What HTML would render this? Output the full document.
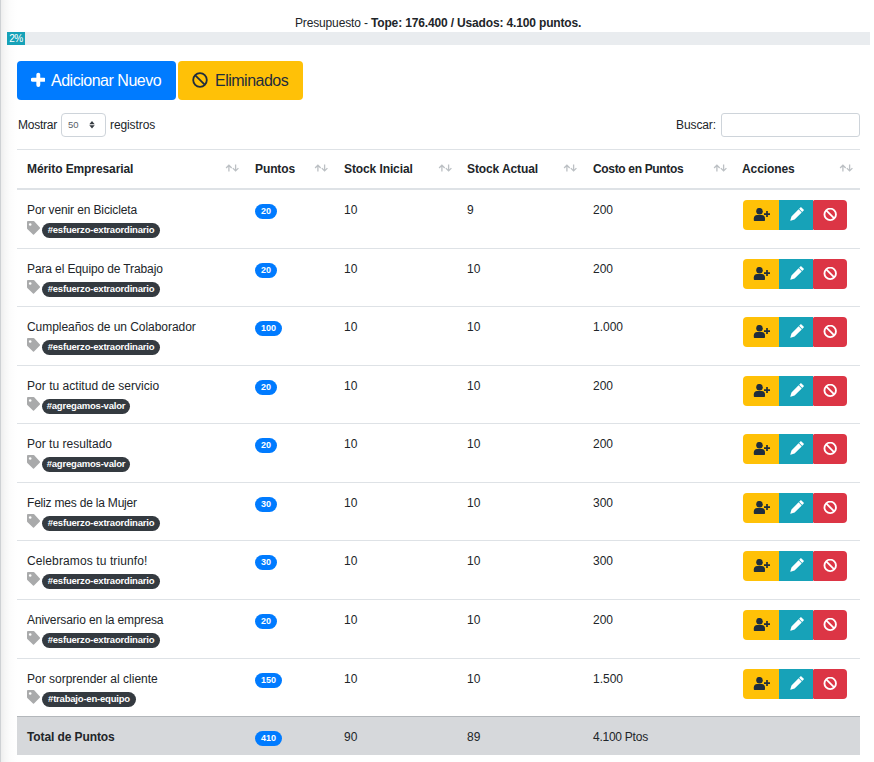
<!DOCTYPE html><html><head><meta charset="utf-8"><style>
html,body{margin:0;padding:0;}
body{width:874px;height:762px;overflow:hidden;position:relative;background:#fff;font-family:"Liberation Sans",sans-serif;color:#212529;}
.shadow{position:absolute;left:0;top:0;width:18px;height:762px;background:linear-gradient(to right,#ced1d4 0,#ced1d4 1px,#efefef 1.5px,#f6f6f6 5px,#fcfcfc 10px,#fff 17px);}
.a{position:absolute;white-space:nowrap;}
.si{position:absolute;}
.hline{position:absolute;left:17px;width:843px;height:1px;background:#dee2e6;}
.nm{font-size:12px;letter-spacing:-0.12px;}
.num{font-size:12px;}
.bold{font-weight:bold;}
.pill{position:absolute;height:15px;border-radius:8px;background:#007bff;color:#fff;font-weight:bold;font-size:9px;line-height:15px;text-align:center;}
.tagb{position:absolute;height:15px;border-radius:8px;background:#343a40;color:#fff;font-weight:bold;font-size:9.5px;line-height:13px;text-align:center;letter-spacing:-0.2px;}
.btn{position:absolute;height:30px;display:flex;align-items:center;justify-content:center;}
</style></head><body>
<div class="shadow"></div>

<div class="a" style="left:295px;top:16px;font-size:12px;line-height:14px;letter-spacing:-0.15px">Presupuesto - <b>Tope: 176.400 / Usados: 4.100 puntos.</b></div>
<div class="a" style="left:7px;top:32px;width:863px;height:13px;background:#e9ecef"></div>
<div class="a" style="left:7px;top:32px;width:18px;height:13px;background:#17a2b8;color:#fff;font-size:10px;line-height:13px;text-align:center;letter-spacing:-0.4px">2%</div>
<div class="a" style="left:17px;top:61px;width:159px;height:39px;background:#007bff;border-radius:4px;"></div>
<svg class="a" style="left:31px;top:72px" width="14" height="15" viewBox="0 0 14 15"><path d="M7.3 2.6v10.4M1.6 7.8h11.4" stroke="#fff" stroke-width="3.9" stroke-linecap="round"/></svg>
<div class="a" style="left:51px;top:71.5px;font-size:16px;line-height:18px;color:#fff;letter-spacing:-0.48px">Adicionar Nuevo</div>
<div class="a" style="left:178px;top:61px;width:125px;height:39px;background:#ffc107;border-radius:4px;"></div>
<div class="a" style="left:192px;top:72px"><svg width="16" height="16" viewBox="0 0 16 16"><circle cx="8" cy="8" r="6.8" fill="none" stroke="#1f2d3d" stroke-width="1.8"/><path d="M3.3 3.3l9.4 9.4" stroke="#1f2d3d" stroke-width="1.8"/></svg></div>
<div class="a" style="left:215px;top:71.5px;font-size:16px;line-height:18px;color:#1f2d3d;letter-spacing:-0.5px">Eliminados</div>
<div class="a" style="left:18px;top:118px;font-size:12px;line-height:14px;letter-spacing:-0.25px">Mostrar</div>
<div class="a" style="left:61px;top:113px;width:43px;height:22px;border:1px solid #ced4da;border-radius:4px;"></div>
<div class="a" style="left:68px;top:119px;font-size:9.5px;line-height:11px;color:#5a6169;letter-spacing:-0.1px">50</div>
<svg class="a" style="left:89px;top:120px" width="6" height="10" viewBox="0 0 6 10"><path d="M0.3 4.3L3 1L5.7 4.3Z M0.3 5.2L3 8.6L5.7 5.2Z" fill="#343a40"/></svg>
<div class="a" style="left:110px;top:118px;font-size:12px;line-height:14px;letter-spacing:-0.1px">registros</div>
<div class="a" style="left:676px;top:118px;font-size:12px;line-height:14px;letter-spacing:-0.1px">Buscar:</div>
<div class="a" style="left:721px;top:113px;width:137px;height:22px;border:1px solid #ced4da;border-radius:3px;"></div>
<div class="hline" style="top:149px"></div>
<div class="hline" style="top:188px;height:2px"></div>
<div class="a bold" style="left:27px;top:162px;font-size:12px;line-height:14px;letter-spacing:-0.1px">Mérito Empresarial</div>
<svg class="si" style="left:224.5px;top:163.5px" width="15" height="8" viewBox="0 0 15 8"><g fill="none" stroke="#bcc0c4" stroke-width="1.3"><path d="M3.9 7.6V1.3M1.1 4L3.9 1.2L6.7 4"/><path d="M10.6 0.5V6.8M7.8 4.1L10.6 6.9L13.4 4.1"/></g></svg>
<div class="a bold" style="left:255px;top:162px;font-size:12px;line-height:14px;letter-spacing:-0.1px">Puntos</div>
<svg class="si" style="left:313.5px;top:163.5px" width="15" height="8" viewBox="0 0 15 8"><g fill="none" stroke="#bcc0c4" stroke-width="1.3"><path d="M3.9 7.6V1.3M1.1 4L3.9 1.2L6.7 4"/><path d="M10.6 0.5V6.8M7.8 4.1L10.6 6.9L13.4 4.1"/></g></svg>
<div class="a bold" style="left:344px;top:162px;font-size:12px;line-height:14px;letter-spacing:-0.1px">Stock Inicial</div>
<svg class="si" style="left:437.5px;top:163.5px" width="15" height="8" viewBox="0 0 15 8"><g fill="none" stroke="#bcc0c4" stroke-width="1.3"><path d="M3.9 7.6V1.3M1.1 4L3.9 1.2L6.7 4"/><path d="M10.6 0.5V6.8M7.8 4.1L10.6 6.9L13.4 4.1"/></g></svg>
<div class="a bold" style="left:467px;top:162px;font-size:12px;line-height:14px;letter-spacing:-0.1px">Stock Actual</div>
<svg class="si" style="left:563.0px;top:163.5px" width="15" height="8" viewBox="0 0 15 8"><g fill="none" stroke="#bcc0c4" stroke-width="1.3"><path d="M3.9 7.6V1.3M1.1 4L3.9 1.2L6.7 4"/><path d="M10.6 0.5V6.8M7.8 4.1L10.6 6.9L13.4 4.1"/></g></svg>
<div class="a bold" style="left:593px;top:162px;font-size:12px;line-height:14px;letter-spacing:-0.33px">Costo en Puntos</div>
<svg class="si" style="left:712.5px;top:163.5px" width="15" height="8" viewBox="0 0 15 8"><g fill="none" stroke="#bcc0c4" stroke-width="1.3"><path d="M3.9 7.6V1.3M1.1 4L3.9 1.2L6.7 4"/><path d="M10.6 0.5V6.8M7.8 4.1L10.6 6.9L13.4 4.1"/></g></svg>
<div class="a bold" style="left:742px;top:162px;font-size:12px;line-height:14px;letter-spacing:-0.1px">Acciones</div>
<svg class="si" style="left:838.5px;top:163.5px" width="15" height="8" viewBox="0 0 15 8"><g fill="none" stroke="#bcc0c4" stroke-width="1.3"><path d="M3.9 7.6V1.3M1.1 4L3.9 1.2L6.7 4"/><path d="M10.6 0.5V6.8M7.8 4.1L10.6 6.9L13.4 4.1"/></g></svg>
<div class="a nm" style="left:27px;top:202.50px;line-height:14px;letter-spacing:-0.12px">Por venir en Bicicleta</div>
<div class="a" style="left:27px;top:221.00px;width:14px;height:14px"><svg width="14" height="14" viewBox="0 0 14 14"><path d="M0.9 0H6.5Q6.9 0 7.2 .3L12.9 6.5Q13.3 7 12.9 7.5L7 13.5Q6.5 14 6 13.5L.3 7.9Q0 7.6 0 7.2V.9Q0 0 .9 0Z" fill="#a9aaab"/><circle cx="3.2" cy="3.5" r="1.3" fill="#fff"/></svg></div>
<div class="tagb" style="left:42px;top:223.40px;width:118px">#esfuerzo-extraordinario</div>
<div class="pill" style="left:255px;top:204.00px;width:22px">20</div>
<div class="a num" style="left:344px;top:202.80px;line-height:14px">10</div>
<div class="a num" style="left:467px;top:202.80px;line-height:14px">9</div>
<div class="a num" style="left:593px;top:202.80px;line-height:14px">200</div>
<div class="btn" style="left:743px;top:199.70px;width:36px;background:#ffc107;border-radius:4px 0 0 4px"><svg width="18" height="14" viewBox="0 0 18 14" style="margin-left:2px"><circle cx="6.5" cy="3.2" r="3.25" fill="#1f2d3d"/><path d="M0.8 12.2V10.4C0.8 8.6 2.2 7.1 4 7.1H8.8C10.6 7.1 12 8.6 12 10.4V12.2Q12 13 11.2 13H1.6Q0.8 13 0.8 12.2Z" fill="#1f2d3d"/><path d="M14 3.1v6M11 6.1h6" stroke="#1f2d3d" stroke-width="1.7"/></svg></div>
<div class="btn" style="left:779px;top:199.70px;width:34px;background:#17a2b8"><svg width="15" height="15" viewBox="0 0 15 15" style="overflow:visible"><path d="M11.94 -0.01L15.06 3.11L13.22 4.94L10.11 1.83ZM9.61 2.33L12.72 5.44L5.58 12.58L1.55 13.78L1.27 13.50L2.47 9.47Z" fill="#fff"/></svg></div>
<div class="btn" style="left:813px;top:199.70px;width:34px;background:#dc3545;border-radius:1.5px 4px 4px 1.5px"><svg width="14" height="14" viewBox="0 0 14 14"><circle cx="7.2" cy="6.4" r="5.75" fill="none" stroke="#fff" stroke-width="1.85"/><path d="M3.2 2.4l8 8" stroke="#fff" stroke-width="1.85"/></svg></div>
<div class="hline" style="top:248px"></div>
<div class="a nm" style="left:27px;top:261.50px;line-height:14px;letter-spacing:-0.12px">Para el Equipo de Trabajo</div>
<div class="a" style="left:27px;top:280.00px;width:14px;height:14px"><svg width="14" height="14" viewBox="0 0 14 14"><path d="M0.9 0H6.5Q6.9 0 7.2 .3L12.9 6.5Q13.3 7 12.9 7.5L7 13.5Q6.5 14 6 13.5L.3 7.9Q0 7.6 0 7.2V.9Q0 0 .9 0Z" fill="#a9aaab"/><circle cx="3.2" cy="3.5" r="1.3" fill="#fff"/></svg></div>
<div class="tagb" style="left:42px;top:282.40px;width:118px">#esfuerzo-extraordinario</div>
<div class="pill" style="left:255px;top:263.00px;width:22px">20</div>
<div class="a num" style="left:344px;top:261.80px;line-height:14px">10</div>
<div class="a num" style="left:467px;top:261.80px;line-height:14px">10</div>
<div class="a num" style="left:593px;top:261.80px;line-height:14px">200</div>
<div class="btn" style="left:743px;top:258.70px;width:36px;background:#ffc107;border-radius:4px 0 0 4px"><svg width="18" height="14" viewBox="0 0 18 14" style="margin-left:2px"><circle cx="6.5" cy="3.2" r="3.25" fill="#1f2d3d"/><path d="M0.8 12.2V10.4C0.8 8.6 2.2 7.1 4 7.1H8.8C10.6 7.1 12 8.6 12 10.4V12.2Q12 13 11.2 13H1.6Q0.8 13 0.8 12.2Z" fill="#1f2d3d"/><path d="M14 3.1v6M11 6.1h6" stroke="#1f2d3d" stroke-width="1.7"/></svg></div>
<div class="btn" style="left:779px;top:258.70px;width:34px;background:#17a2b8"><svg width="15" height="15" viewBox="0 0 15 15" style="overflow:visible"><path d="M11.94 -0.01L15.06 3.11L13.22 4.94L10.11 1.83ZM9.61 2.33L12.72 5.44L5.58 12.58L1.55 13.78L1.27 13.50L2.47 9.47Z" fill="#fff"/></svg></div>
<div class="btn" style="left:813px;top:258.70px;width:34px;background:#dc3545;border-radius:1.5px 4px 4px 1.5px"><svg width="14" height="14" viewBox="0 0 14 14"><circle cx="7.2" cy="6.4" r="5.75" fill="none" stroke="#fff" stroke-width="1.85"/><path d="M3.2 2.4l8 8" stroke="#fff" stroke-width="1.85"/></svg></div>
<div class="hline" style="top:306px"></div>
<div class="a nm" style="left:27px;top:319.50px;line-height:14px;letter-spacing:-0.05px">Cumpleaños de un Colaborador</div>
<div class="a" style="left:27px;top:338.00px;width:14px;height:14px"><svg width="14" height="14" viewBox="0 0 14 14"><path d="M0.9 0H6.5Q6.9 0 7.2 .3L12.9 6.5Q13.3 7 12.9 7.5L7 13.5Q6.5 14 6 13.5L.3 7.9Q0 7.6 0 7.2V.9Q0 0 .9 0Z" fill="#a9aaab"/><circle cx="3.2" cy="3.5" r="1.3" fill="#fff"/></svg></div>
<div class="tagb" style="left:42px;top:340.40px;width:118px">#esfuerzo-extraordinario</div>
<div class="pill" style="left:255px;top:321.00px;width:27px">100</div>
<div class="a num" style="left:344px;top:319.80px;line-height:14px">10</div>
<div class="a num" style="left:467px;top:319.80px;line-height:14px">10</div>
<div class="a num" style="left:593px;top:319.80px;line-height:14px">1.000</div>
<div class="btn" style="left:743px;top:316.70px;width:36px;background:#ffc107;border-radius:4px 0 0 4px"><svg width="18" height="14" viewBox="0 0 18 14" style="margin-left:2px"><circle cx="6.5" cy="3.2" r="3.25" fill="#1f2d3d"/><path d="M0.8 12.2V10.4C0.8 8.6 2.2 7.1 4 7.1H8.8C10.6 7.1 12 8.6 12 10.4V12.2Q12 13 11.2 13H1.6Q0.8 13 0.8 12.2Z" fill="#1f2d3d"/><path d="M14 3.1v6M11 6.1h6" stroke="#1f2d3d" stroke-width="1.7"/></svg></div>
<div class="btn" style="left:779px;top:316.70px;width:34px;background:#17a2b8"><svg width="15" height="15" viewBox="0 0 15 15" style="overflow:visible"><path d="M11.94 -0.01L15.06 3.11L13.22 4.94L10.11 1.83ZM9.61 2.33L12.72 5.44L5.58 12.58L1.55 13.78L1.27 13.50L2.47 9.47Z" fill="#fff"/></svg></div>
<div class="btn" style="left:813px;top:316.70px;width:34px;background:#dc3545;border-radius:1.5px 4px 4px 1.5px"><svg width="14" height="14" viewBox="0 0 14 14"><circle cx="7.2" cy="6.4" r="5.75" fill="none" stroke="#fff" stroke-width="1.85"/><path d="M3.2 2.4l8 8" stroke="#fff" stroke-width="1.85"/></svg></div>
<div class="hline" style="top:365px"></div>
<div class="a nm" style="left:27px;top:378.50px;line-height:14px;letter-spacing:0.03px">Por tu actitud de servicio</div>
<div class="a" style="left:27px;top:397.00px;width:14px;height:14px"><svg width="14" height="14" viewBox="0 0 14 14"><path d="M0.9 0H6.5Q6.9 0 7.2 .3L12.9 6.5Q13.3 7 12.9 7.5L7 13.5Q6.5 14 6 13.5L.3 7.9Q0 7.6 0 7.2V.9Q0 0 .9 0Z" fill="#a9aaab"/><circle cx="3.2" cy="3.5" r="1.3" fill="#fff"/></svg></div>
<div class="tagb" style="left:42px;top:399.40px;width:88px">#agregamos-valor</div>
<div class="pill" style="left:255px;top:380.00px;width:22px">20</div>
<div class="a num" style="left:344px;top:378.80px;line-height:14px">10</div>
<div class="a num" style="left:467px;top:378.80px;line-height:14px">10</div>
<div class="a num" style="left:593px;top:378.80px;line-height:14px">200</div>
<div class="btn" style="left:743px;top:375.70px;width:36px;background:#ffc107;border-radius:4px 0 0 4px"><svg width="18" height="14" viewBox="0 0 18 14" style="margin-left:2px"><circle cx="6.5" cy="3.2" r="3.25" fill="#1f2d3d"/><path d="M0.8 12.2V10.4C0.8 8.6 2.2 7.1 4 7.1H8.8C10.6 7.1 12 8.6 12 10.4V12.2Q12 13 11.2 13H1.6Q0.8 13 0.8 12.2Z" fill="#1f2d3d"/><path d="M14 3.1v6M11 6.1h6" stroke="#1f2d3d" stroke-width="1.7"/></svg></div>
<div class="btn" style="left:779px;top:375.70px;width:34px;background:#17a2b8"><svg width="15" height="15" viewBox="0 0 15 15" style="overflow:visible"><path d="M11.94 -0.01L15.06 3.11L13.22 4.94L10.11 1.83ZM9.61 2.33L12.72 5.44L5.58 12.58L1.55 13.78L1.27 13.50L2.47 9.47Z" fill="#fff"/></svg></div>
<div class="btn" style="left:813px;top:375.70px;width:34px;background:#dc3545;border-radius:1.5px 4px 4px 1.5px"><svg width="14" height="14" viewBox="0 0 14 14"><circle cx="7.2" cy="6.4" r="5.75" fill="none" stroke="#fff" stroke-width="1.85"/><path d="M3.2 2.4l8 8" stroke="#fff" stroke-width="1.85"/></svg></div>
<div class="hline" style="top:423px"></div>
<div class="a nm" style="left:27px;top:436.50px;line-height:14px;letter-spacing:0.02px">Por tu resultado</div>
<div class="a" style="left:27px;top:455.00px;width:14px;height:14px"><svg width="14" height="14" viewBox="0 0 14 14"><path d="M0.9 0H6.5Q6.9 0 7.2 .3L12.9 6.5Q13.3 7 12.9 7.5L7 13.5Q6.5 14 6 13.5L.3 7.9Q0 7.6 0 7.2V.9Q0 0 .9 0Z" fill="#a9aaab"/><circle cx="3.2" cy="3.5" r="1.3" fill="#fff"/></svg></div>
<div class="tagb" style="left:42px;top:457.40px;width:88px">#agregamos-valor</div>
<div class="pill" style="left:255px;top:438.00px;width:22px">20</div>
<div class="a num" style="left:344px;top:436.80px;line-height:14px">10</div>
<div class="a num" style="left:467px;top:436.80px;line-height:14px">10</div>
<div class="a num" style="left:593px;top:436.80px;line-height:14px">200</div>
<div class="btn" style="left:743px;top:433.70px;width:36px;background:#ffc107;border-radius:4px 0 0 4px"><svg width="18" height="14" viewBox="0 0 18 14" style="margin-left:2px"><circle cx="6.5" cy="3.2" r="3.25" fill="#1f2d3d"/><path d="M0.8 12.2V10.4C0.8 8.6 2.2 7.1 4 7.1H8.8C10.6 7.1 12 8.6 12 10.4V12.2Q12 13 11.2 13H1.6Q0.8 13 0.8 12.2Z" fill="#1f2d3d"/><path d="M14 3.1v6M11 6.1h6" stroke="#1f2d3d" stroke-width="1.7"/></svg></div>
<div class="btn" style="left:779px;top:433.70px;width:34px;background:#17a2b8"><svg width="15" height="15" viewBox="0 0 15 15" style="overflow:visible"><path d="M11.94 -0.01L15.06 3.11L13.22 4.94L10.11 1.83ZM9.61 2.33L12.72 5.44L5.58 12.58L1.55 13.78L1.27 13.50L2.47 9.47Z" fill="#fff"/></svg></div>
<div class="btn" style="left:813px;top:433.70px;width:34px;background:#dc3545;border-radius:1.5px 4px 4px 1.5px"><svg width="14" height="14" viewBox="0 0 14 14"><circle cx="7.2" cy="6.4" r="5.75" fill="none" stroke="#fff" stroke-width="1.85"/><path d="M3.2 2.4l8 8" stroke="#fff" stroke-width="1.85"/></svg></div>
<div class="hline" style="top:482px"></div>
<div class="a nm" style="left:27px;top:495.50px;line-height:14px;letter-spacing:-0.2px">Feliz mes de la Mujer</div>
<div class="a" style="left:27px;top:514.00px;width:14px;height:14px"><svg width="14" height="14" viewBox="0 0 14 14"><path d="M0.9 0H6.5Q6.9 0 7.2 .3L12.9 6.5Q13.3 7 12.9 7.5L7 13.5Q6.5 14 6 13.5L.3 7.9Q0 7.6 0 7.2V.9Q0 0 .9 0Z" fill="#a9aaab"/><circle cx="3.2" cy="3.5" r="1.3" fill="#fff"/></svg></div>
<div class="tagb" style="left:42px;top:516.40px;width:118px">#esfuerzo-extraordinario</div>
<div class="pill" style="left:255px;top:497.00px;width:22px">30</div>
<div class="a num" style="left:344px;top:495.80px;line-height:14px">10</div>
<div class="a num" style="left:467px;top:495.80px;line-height:14px">10</div>
<div class="a num" style="left:593px;top:495.80px;line-height:14px">300</div>
<div class="btn" style="left:743px;top:492.70px;width:36px;background:#ffc107;border-radius:4px 0 0 4px"><svg width="18" height="14" viewBox="0 0 18 14" style="margin-left:2px"><circle cx="6.5" cy="3.2" r="3.25" fill="#1f2d3d"/><path d="M0.8 12.2V10.4C0.8 8.6 2.2 7.1 4 7.1H8.8C10.6 7.1 12 8.6 12 10.4V12.2Q12 13 11.2 13H1.6Q0.8 13 0.8 12.2Z" fill="#1f2d3d"/><path d="M14 3.1v6M11 6.1h6" stroke="#1f2d3d" stroke-width="1.7"/></svg></div>
<div class="btn" style="left:779px;top:492.70px;width:34px;background:#17a2b8"><svg width="15" height="15" viewBox="0 0 15 15" style="overflow:visible"><path d="M11.94 -0.01L15.06 3.11L13.22 4.94L10.11 1.83ZM9.61 2.33L12.72 5.44L5.58 12.58L1.55 13.78L1.27 13.50L2.47 9.47Z" fill="#fff"/></svg></div>
<div class="btn" style="left:813px;top:492.70px;width:34px;background:#dc3545;border-radius:1.5px 4px 4px 1.5px"><svg width="14" height="14" viewBox="0 0 14 14"><circle cx="7.2" cy="6.4" r="5.75" fill="none" stroke="#fff" stroke-width="1.85"/><path d="M3.2 2.4l8 8" stroke="#fff" stroke-width="1.85"/></svg></div>
<div class="hline" style="top:540px"></div>
<div class="a nm" style="left:27px;top:553.50px;line-height:14px;letter-spacing:0.11px">Celebramos tu triunfo!</div>
<div class="a" style="left:27px;top:572.00px;width:14px;height:14px"><svg width="14" height="14" viewBox="0 0 14 14"><path d="M0.9 0H6.5Q6.9 0 7.2 .3L12.9 6.5Q13.3 7 12.9 7.5L7 13.5Q6.5 14 6 13.5L.3 7.9Q0 7.6 0 7.2V.9Q0 0 .9 0Z" fill="#a9aaab"/><circle cx="3.2" cy="3.5" r="1.3" fill="#fff"/></svg></div>
<div class="tagb" style="left:42px;top:574.40px;width:118px">#esfuerzo-extraordinario</div>
<div class="pill" style="left:255px;top:555.00px;width:22px">30</div>
<div class="a num" style="left:344px;top:553.80px;line-height:14px">10</div>
<div class="a num" style="left:467px;top:553.80px;line-height:14px">10</div>
<div class="a num" style="left:593px;top:553.80px;line-height:14px">300</div>
<div class="btn" style="left:743px;top:550.70px;width:36px;background:#ffc107;border-radius:4px 0 0 4px"><svg width="18" height="14" viewBox="0 0 18 14" style="margin-left:2px"><circle cx="6.5" cy="3.2" r="3.25" fill="#1f2d3d"/><path d="M0.8 12.2V10.4C0.8 8.6 2.2 7.1 4 7.1H8.8C10.6 7.1 12 8.6 12 10.4V12.2Q12 13 11.2 13H1.6Q0.8 13 0.8 12.2Z" fill="#1f2d3d"/><path d="M14 3.1v6M11 6.1h6" stroke="#1f2d3d" stroke-width="1.7"/></svg></div>
<div class="btn" style="left:779px;top:550.70px;width:34px;background:#17a2b8"><svg width="15" height="15" viewBox="0 0 15 15" style="overflow:visible"><path d="M11.94 -0.01L15.06 3.11L13.22 4.94L10.11 1.83ZM9.61 2.33L12.72 5.44L5.58 12.58L1.55 13.78L1.27 13.50L2.47 9.47Z" fill="#fff"/></svg></div>
<div class="btn" style="left:813px;top:550.70px;width:34px;background:#dc3545;border-radius:1.5px 4px 4px 1.5px"><svg width="14" height="14" viewBox="0 0 14 14"><circle cx="7.2" cy="6.4" r="5.75" fill="none" stroke="#fff" stroke-width="1.85"/><path d="M3.2 2.4l8 8" stroke="#fff" stroke-width="1.85"/></svg></div>
<div class="hline" style="top:599px"></div>
<div class="a nm" style="left:27px;top:612.50px;line-height:14px;letter-spacing:-0.12px">Aniversario en la empresa</div>
<div class="a" style="left:27px;top:631.00px;width:14px;height:14px"><svg width="14" height="14" viewBox="0 0 14 14"><path d="M0.9 0H6.5Q6.9 0 7.2 .3L12.9 6.5Q13.3 7 12.9 7.5L7 13.5Q6.5 14 6 13.5L.3 7.9Q0 7.6 0 7.2V.9Q0 0 .9 0Z" fill="#a9aaab"/><circle cx="3.2" cy="3.5" r="1.3" fill="#fff"/></svg></div>
<div class="tagb" style="left:42px;top:633.40px;width:118px">#esfuerzo-extraordinario</div>
<div class="pill" style="left:255px;top:614.00px;width:22px">20</div>
<div class="a num" style="left:344px;top:612.80px;line-height:14px">10</div>
<div class="a num" style="left:467px;top:612.80px;line-height:14px">10</div>
<div class="a num" style="left:593px;top:612.80px;line-height:14px">200</div>
<div class="btn" style="left:743px;top:609.70px;width:36px;background:#ffc107;border-radius:4px 0 0 4px"><svg width="18" height="14" viewBox="0 0 18 14" style="margin-left:2px"><circle cx="6.5" cy="3.2" r="3.25" fill="#1f2d3d"/><path d="M0.8 12.2V10.4C0.8 8.6 2.2 7.1 4 7.1H8.8C10.6 7.1 12 8.6 12 10.4V12.2Q12 13 11.2 13H1.6Q0.8 13 0.8 12.2Z" fill="#1f2d3d"/><path d="M14 3.1v6M11 6.1h6" stroke="#1f2d3d" stroke-width="1.7"/></svg></div>
<div class="btn" style="left:779px;top:609.70px;width:34px;background:#17a2b8"><svg width="15" height="15" viewBox="0 0 15 15" style="overflow:visible"><path d="M11.94 -0.01L15.06 3.11L13.22 4.94L10.11 1.83ZM9.61 2.33L12.72 5.44L5.58 12.58L1.55 13.78L1.27 13.50L2.47 9.47Z" fill="#fff"/></svg></div>
<div class="btn" style="left:813px;top:609.70px;width:34px;background:#dc3545;border-radius:1.5px 4px 4px 1.5px"><svg width="14" height="14" viewBox="0 0 14 14"><circle cx="7.2" cy="6.4" r="5.75" fill="none" stroke="#fff" stroke-width="1.85"/><path d="M3.2 2.4l8 8" stroke="#fff" stroke-width="1.85"/></svg></div>
<div class="hline" style="top:658px"></div>
<div class="a nm" style="left:27px;top:671.50px;line-height:14px;letter-spacing:0.0px">Por sorprender al cliente</div>
<div class="a" style="left:27px;top:690.00px;width:14px;height:14px"><svg width="14" height="14" viewBox="0 0 14 14"><path d="M0.9 0H6.5Q6.9 0 7.2 .3L12.9 6.5Q13.3 7 12.9 7.5L7 13.5Q6.5 14 6 13.5L.3 7.9Q0 7.6 0 7.2V.9Q0 0 .9 0Z" fill="#a9aaab"/><circle cx="3.2" cy="3.5" r="1.3" fill="#fff"/></svg></div>
<div class="tagb" style="left:42px;top:692.40px;width:94px">#trabajo-en-equipo</div>
<div class="pill" style="left:255px;top:673.00px;width:27px">150</div>
<div class="a num" style="left:344px;top:671.80px;line-height:14px">10</div>
<div class="a num" style="left:467px;top:671.80px;line-height:14px">10</div>
<div class="a num" style="left:593px;top:671.80px;line-height:14px">1.500</div>
<div class="btn" style="left:743px;top:668.70px;width:36px;background:#ffc107;border-radius:4px 0 0 4px"><svg width="18" height="14" viewBox="0 0 18 14" style="margin-left:2px"><circle cx="6.5" cy="3.2" r="3.25" fill="#1f2d3d"/><path d="M0.8 12.2V10.4C0.8 8.6 2.2 7.1 4 7.1H8.8C10.6 7.1 12 8.6 12 10.4V12.2Q12 13 11.2 13H1.6Q0.8 13 0.8 12.2Z" fill="#1f2d3d"/><path d="M14 3.1v6M11 6.1h6" stroke="#1f2d3d" stroke-width="1.7"/></svg></div>
<div class="btn" style="left:779px;top:668.70px;width:34px;background:#17a2b8"><svg width="15" height="15" viewBox="0 0 15 15" style="overflow:visible"><path d="M11.94 -0.01L15.06 3.11L13.22 4.94L10.11 1.83ZM9.61 2.33L12.72 5.44L5.58 12.58L1.55 13.78L1.27 13.50L2.47 9.47Z" fill="#fff"/></svg></div>
<div class="btn" style="left:813px;top:668.70px;width:34px;background:#dc3545;border-radius:1.5px 4px 4px 1.5px"><svg width="14" height="14" viewBox="0 0 14 14"><circle cx="7.2" cy="6.4" r="5.75" fill="none" stroke="#fff" stroke-width="1.85"/><path d="M3.2 2.4l8 8" stroke="#fff" stroke-width="1.85"/></svg></div>
<div class="a" style="left:17px;top:716px;width:843px;height:39px;background:#d6d8db"></div>
<div class="hline" style="top:716px;background:#b3b7bb"></div>
<div class="a bold" style="left:27px;top:729.50px;font-size:12px;line-height:14px;letter-spacing:-0.1px">Total de Puntos</div>
<div class="pill" style="left:255px;top:730.80px;width:27px">410</div>
<div class="a num" style="left:344px;top:730.20px;line-height:14px">90</div>
<div class="a num" style="left:467px;top:730.20px;line-height:14px">89</div>
<div class="a num" style="left:593px;top:730.20px;line-height:14px;letter-spacing:-0.25px">4.100 Ptos</div>
</body></html>
